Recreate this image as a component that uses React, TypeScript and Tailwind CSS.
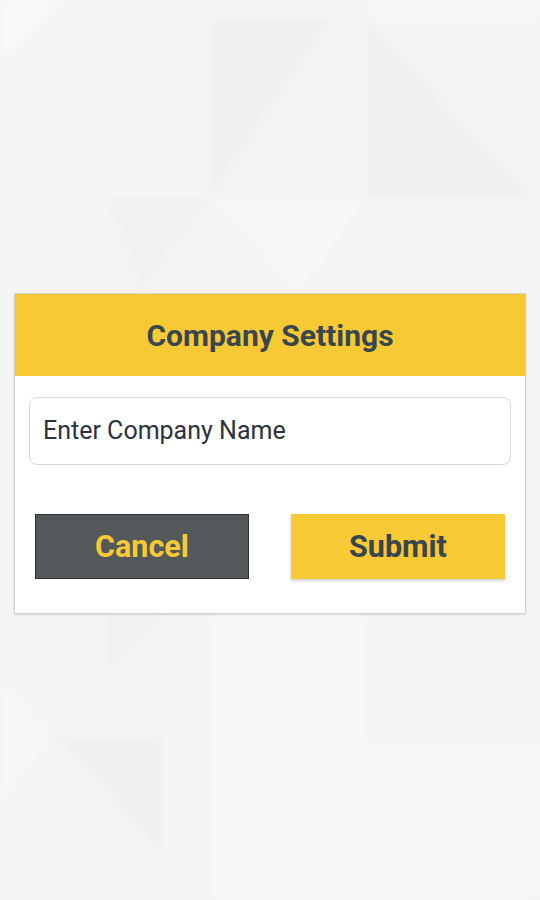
import React from "react";

function Background() {
  return (
    <svg
      className="absolute inset-0 h-full w-full"
      viewBox="0 0 540 900"
      preserveAspectRatio="none"
      aria-hidden="true"
    >
      <defs>
        <filter id="soft" x="-5%" y="-5%" width="110%" height="110%">
          <feGaussianBlur stdDeviation="3" />
        </filter>
      </defs>
      <rect x="0" y="0" width="540" height="900" fill="#f5f5f5" />
      <g filter="url(#soft)">
        <polygon points="0,0 70,0 0,60" fill="#f8f8f8" />
        <polygon points="211,20 330,20 211,198" fill="#f0f0f0" />
        <polygon points="330,20 367,20 367,198 211,198" fill="#f4f4f4" />
        <polygon points="367,20 367,198 535,198" fill="#f0f0f0" />
        <polygon points="367,0 540,0 540,20 367,20" fill="#f7f7f7" />
        <polygon points="108,198 211,198 140,292" fill="#f1f1f1" />
        <polygon points="211,198 367,198 300,292" fill="#f7f7f7" />
        <polygon points="108,615 165,615 108,675" fill="#f1f1f1" />
        <polygon points="55,737 160,737 160,850" fill="#f0f0f0" />
        <polygon points="0,680 55,737 0,800" fill="#f7f7f7" />
        <polygon points="211,615 367,615 367,900 211,900" fill="#f7f7f7" />
        <polygon points="367,740 540,740 540,900 367,900" fill="#f6f6f6" />
      </g>
    </svg>
  );
}

export default function App() {
  return (
    <div
      className="relative h-[900px] w-[540px] overflow-hidden bg-[#f5f5f5]"
      style={{ fontFamily: "Roboto, 'Liberation Sans', sans-serif" }}
    >
      <Background />
      <div className="relative pt-[293px] px-[14px]">
        <div className="border border-[#d2d2d2] bg-white shadow-[0_1px_2px_rgba(0,0,0,0.12)]">
          <div className="flex h-[82px] items-center justify-center bg-[#f7c934]">
            <span className="text-[30px] font-bold text-[#394650]">
              Company Settings
            </span>
          </div>
          <div className="px-[14px] pt-[21px] pb-[34px]">
            <div className="flex h-[68px] items-center rounded-[8px] border border-[#d9d9d9] px-[13px]">
              <span className="text-[25px] text-[#2b3240]">Enter Company Name</span>
            </div>
            <div className="mt-[49px] flex justify-between px-[6px]">
              <button className="flex h-[65px] w-[214px] items-center justify-center border border-[#2e3133] bg-[#53585b] text-[30.5px] font-bold text-[#f7c934]">
                Cancel
              </button>
              <button className="flex h-[65px] w-[214px] items-center justify-center bg-[#f7c934] text-[30.5px] font-bold text-[#394650] shadow-[0_2px_3px_rgba(0,0,0,0.18)]">
                Submit
              </button>
            </div>
          </div>
        </div>
      </div>
    </div>
  );
}
